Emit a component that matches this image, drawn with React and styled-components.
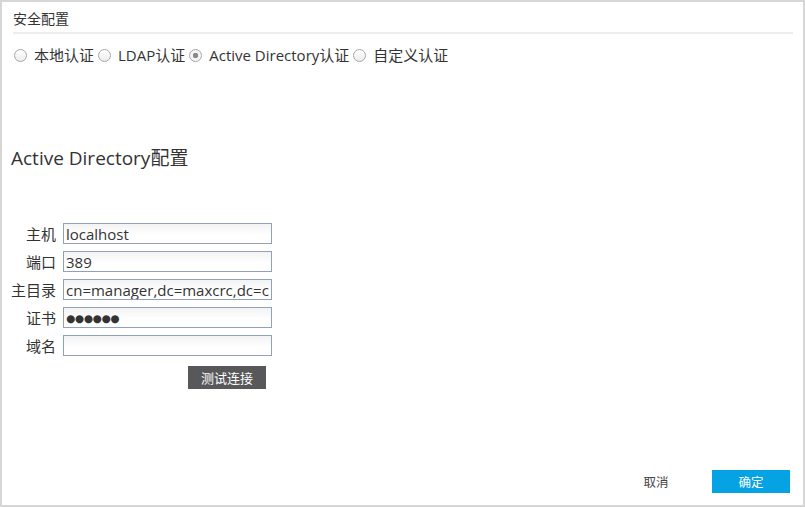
import styled, { createGlobalStyle } from "styled-components";

const GlobalStyle = createGlobalStyle`
  html, body {
    margin: 0;
    padding: 0;
    background: #fff;
  }
  body {
    font-family: "Open Sans", "Noto Sans CJK SC", sans-serif;
    color: #333;
  }
`;

const authOptions = [
  { label: "本地认证", checked: false },
  { label: "LDAP认证", checked: false },
  { label: "Active Directory认证", checked: true },
  { label: "自定义认证", checked: false },
];

const fields = [
  { label: "主机", value: "localhost" },
  { label: "端口", value: "389" },
  { label: "主目录", value: "cn=manager,dc=maxcrc,dc=com" },
  { label: "证书", value: "●●●●●●", secret: true },
  { label: "域名", value: "" },
];

const App = () => {
  return (
    <>
      <GlobalStyle />
      <Frame>
        <Header>
          <Title>安全配置</Title>
          <Divider />
        </Header>
        <RadioRow>
          {authOptions.map((opt) => (
            <RadioItem key={opt.label}>
              <RadioDot checked={opt.checked} />
              {opt.label}
            </RadioItem>
          ))}
        </RadioRow>
        <SectionTitle>Active Directory配置</SectionTitle>
        <Form>
          {fields.map((f) => (
            <FieldRow key={f.label}>
              <Label>{f.label}</Label>
              <Input secret={f.secret} defaultValue={f.value} readOnly />
            </FieldRow>
          ))}
          <TestRow>
            <DarkButton>测试连接</DarkButton>
          </TestRow>
        </Form>
        <Footer>
          <CancelButton>取消</CancelButton>
          <PrimaryButton>确定</PrimaryButton>
        </Footer>
      </Frame>
    </>
  );
};

export default App;

const Frame = styled.div`
  box-sizing: border-box;
  width: 805px;
  height: 507px;
  border: 2px solid #d6d6d6;
  display: flex;
  flex-direction: column;
`;

const Header = styled.div`
  padding: 6px 10px 0 11px;
`;

const Title = styled.div`
  font-size: 14px;
  line-height: 22px;
  height: 24px;
`;

const Divider = styled.div`
  height: 2px;
  background: #ededed;
`;

const RadioRow = styled.div`
  display: flex;
  align-items: center;
  gap: 4px;
  padding: 11px 0 0 12px;
  font-size: 15px;
  line-height: 20px;
`;

const RadioItem = styled.label`
  display: flex;
  align-items: center;
  gap: 7px;
`;

const RadioDot = styled.span`
  box-sizing: border-box;
  width: 13px;
  height: 13px;
  border-radius: 50%;
  border: 1px solid #a8a8a8;
  background: ${(p) =>
    p.checked
      ? "radial-gradient(circle, #8a8a8a 0 2.5px, #f4f4f4 3px)"
      : "linear-gradient(#ffffff, #ececec)"};
`;

const SectionTitle = styled.h2`
  margin: 81px 0 0 9px;
  font-size: 19px;
  font-weight: 400;
  line-height: 24px;
`;

const Form = styled.div`
  display: flex;
  flex-direction: column;
  gap: 7px;
  margin-top: 53px;
  padding-left: 9px;
`;

const FieldRow = styled.div`
  display: flex;
  align-items: center;
  gap: 7px;
`;

const Label = styled.span`
  width: 45px;
  text-align: right;
  font-size: 15px;
  white-space: nowrap;
`;

const Input = styled.input`
  box-sizing: border-box;
  width: 209px;
  height: 21px;
  padding: 0 2px;
  border: 1px solid #8fa2bd;
  background: linear-gradient(#f3f3f3, #ffffff 60%);
  font-family: ${(p) => (p.secret ? '"DejaVu Sans", sans-serif' : '"Open Sans", sans-serif')};
  font-size: ${(p) => (p.secret ? "10.5px" : "15px")};
  letter-spacing: ${(p) => (p.secret ? "-0.3px" : "0")};
  color: #333;
  outline: none;
`;

const TestRow = styled.div`
  display: flex;
  padding-left: 177px;
  margin-top: 3px;
`;

const DarkButton = styled.button`
  width: 78px;
  height: 23px;
  border: none;
  background: #58585b;
  color: #fff;
  font-family: "Open Sans", "Noto Sans CJK SC", sans-serif;
  font-size: 13px;
  padding: 0;
`;

const Footer = styled.div`
  margin-top: auto;
  display: flex;
  align-items: center;
  justify-content: flex-end;
  gap: 26px;
  padding: 0 13px 12px 0;
`;

const CancelButton = styled.button`
  border: none;
  background: none;
  width: 60px;
  height: 23px;
  padding: 0;
  color: #444;
  font-family: "Open Sans", "Noto Sans CJK SC", sans-serif;
  font-size: 12.5px;
`;

const PrimaryButton = styled.button`
  width: 78px;
  height: 23px;
  border: none;
  background: #05a3e3;
  color: #fff;
  padding: 0;
  font-family: "Open Sans", "Noto Sans CJK SC", sans-serif;
  font-size: 12.5px;
`;
